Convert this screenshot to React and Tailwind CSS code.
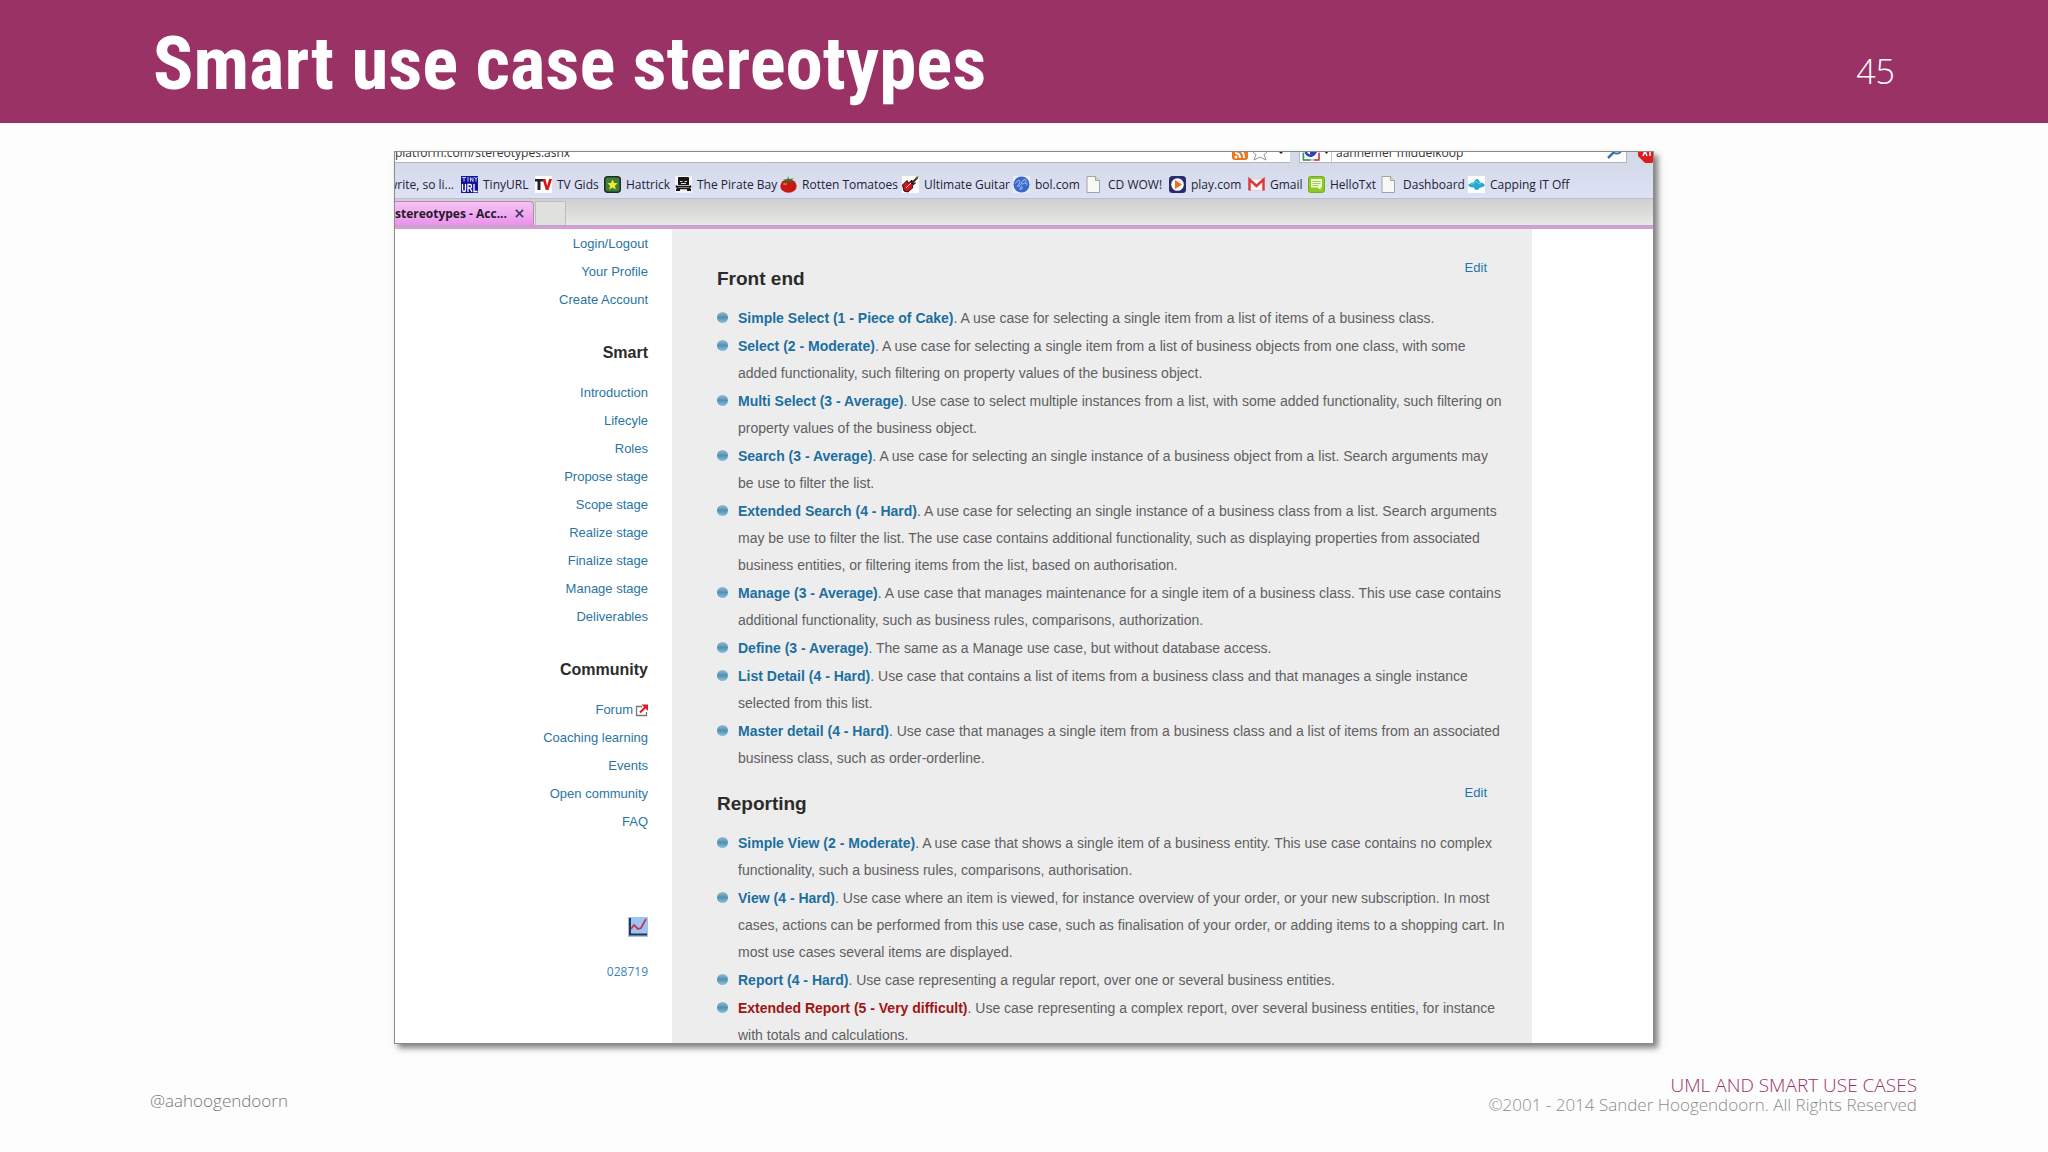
const frontEnd = [
  { name: "Simple Select (1 - Piece of Cake)", lines: ["A use case for selecting a single item from a list of items of a business class."] },
  {
    name: "Select (2 - Moderate)",
    lines: [
      "A use case for selecting a single item from a list of business objects from one class, with some",
      "added functionality, such filtering on property values of the business object.",
    ],
  },
  {
    name: "Multi Select (3 - Average)",
    lines: [
      "Use case to select multiple instances from a list, with some added functionality, such filtering on",
      "property values of the business object.",
    ],
  },
  {
    name: "Search (3 - Average)",
    lines: [
      "A use case for selecting an single instance of a business object from a list. Search arguments may",
      "be use to filter the list.",
    ],
  },
  {
    name: "Extended Search (4 - Hard)",
    lines: [
      "A use case for selecting an single instance of a business class from a list. Search arguments",
      "may be use to filter the list. The use case contains additional functionality, such as displaying properties from associated",
      "business entities, or filtering items from the list, based on authorisation.",
    ],
  },
  {
    name: "Manage (3 - Average)",
    lines: [
      "A use case that manages maintenance for a single item of a business class. This use case contains",
      "additional functionality, such as business rules, comparisons, authorization.",
    ],
  },
  { name: "Define (3 - Average)", lines: ["The same as a Manage use case, but without database access."] },
  {
    name: "List Detail (4 - Hard)",
    lines: [
      "Use case that contains a list of items from a business class and that manages a single instance",
      "selected from this list.",
    ],
  },
  {
    name: "Master detail (4 - Hard)",
    lines: [
      "Use case that manages a single item from a business class and a list of items from an associated",
      "business class, such as order-orderline.",
    ],
  },
];

const reporting = [
  {
    name: "Simple View (2 - Moderate)",
    lines: [
      "A use case that shows a single item of a business entity. This use case contains no complex",
      "functionality, such a business rules, comparisons, authorisation.",
    ],
  },
  {
    name: "View (4 - Hard)",
    lines: [
      "Use case where an item is viewed, for instance overview of your order, or your new subscription. In most",
      "cases, actions can be performed from this use case, such as finalisation of your order, or adding items to a shopping cart. In",
      "most use cases several items are displayed.",
    ],
  },
  { name: "Report (4 - Hard)", lines: ["Use case representing a regular report, over one or several business entities."] },
  {
    name: "Extended Report (5 - Very difficult)",
    missing: true,
    lines: [
      "Use case representing a complex report, over several business entities, for instance",
      "with totals and calculations.",
    ],
  },
];

function PageIcon() {
  return (
    <svg viewBox="0 0 17 17" className="size-[17px] shrink-0">
      <path d="M1 .5h8.500l4 4v12H1z" fill="#f8f8f4" stroke="#a3a3a3" />
      <path d="M9.500 .5v4h4" fill="#dcdcdc" stroke="#a3a3a3" />
    </svg>
  );
}

function TinyUrlIcon() {
  return (
    <svg viewBox="0 0 17 17" className="size-[17px] shrink-0">
      <path d="M0 0h17v17H0z" fill="#12129a" />
      <path
        d="M1 1.500h4M3 1.500v4M7 1v4.500M9.500 5.500v-4l2.500 4v-4M13.500 1l1.500 2 1.500-2M15 3v2.500"
        fill="none"
        stroke="#c9c9f2"
      />
      <path d="M1.500 8v5.500q0 2 1.500 2t1.500-2V8M7 16V8.500h2q1.500 0 1.500 1.800T9 12H7m2 0 2 4M13 8v7.500h3.500" fill="none" stroke="#fff" strokeWidth="1.300" />
    </svg>
  );
}

function TvIcon() {
  return (
    <svg viewBox="0 0 17 17" className="size-[17px] shrink-0">
      <path d="M0 0h17v17H0z" fill="#fff" />
      <path d="M0 3h8v2.500H5.500V14h-3V5.500H0z" fill="#222" />
      <path d="M7.500 3h3l1.700 7L14 3h3l-3.500 11h-2.700z" fill="#d81418" />
    </svg>
  );
}

function HattrickIcon() {
  return (
    <svg viewBox="0 0 17 17" className="size-[17px] shrink-0">
      <rect x=".75" y=".75" width="15.500" height="15.500" rx="3" fill="#3c7f3a" stroke="#1e2a22" strokeWidth="1.500" />
      <path d="m8.500 3.500 1.500 3.400 3.700.3-2.800 2.500.9 3.700-3.300-2-3.300 2 .9-3.700-2.800-2.500 3.700-.3z" fill="#f8e92c" />
    </svg>
  );
}

function PirateIcon() {
  return (
    <svg viewBox="0 0 17 17" className="size-[17px] shrink-0">
      <path d="M0 0h17v17H0z" fill="#f4f4f8" />
      <path d="M3 2q0-1 1-1h9q1 0 1 1v7H3z" fill="#161616" />
      <path d="M5 5.500h2.500M9.500 5.500H12M6 7.500h5" stroke="#ddd" />
      <path d="M1 9.500 2.500 12.500h12L16 9.500M.5 10.500h16" fill="none" stroke="#161616" strokeWidth="1.500" />
      <path d="M1 14h4M12 14h4" stroke="#161616" strokeWidth="2" />
    </svg>
  );
}

function TomatoIcon() {
  return (
    <svg viewBox="0 0 17 17" className="size-[17px] shrink-0">
      <ellipse cx="8.500" cy="10" rx="8.200" ry="6.800" fill="#c51a12" />
      <ellipse cx="5" cy="8" rx="2" ry="1.300" fill="#e8604c" />
      <path d="M8 0 9 3l5-.5-3 2 1 2.500-3.500-2L5 7.500 6 4.500 2.500 4 7.500 3z" fill="#2f7a25" />
    </svg>
  );
}

function GuitarIcon() {
  return (
    <svg viewBox="0 0 17 17" className="size-[17px] shrink-0">
      <path d="M0 0h17v17H0z" fill="#fff" />
      <path d="m9 8 6-6" stroke="#23231c" strokeWidth="1.800" />
      <path d="m13.500 1 3-1-.5 3-2 1z" fill="#5e6a1d" />
      <path d="M.5 9 5 4.500l1.500 2.500L10 4l-.5 3.500 4-.5-3.500 3 1 1.500L6 16l-4-1z" fill="#d4141c" stroke="#1a1010" />
      <path d="m4 12 5-5" stroke="#f5e4e4" />
    </svg>
  );
}

function BolIcon() {
  return (
    <svg viewBox="0 0 17 17" className="size-[17px] shrink-0">
      <path d="M0 0h17v17H0z" fill="#e9edf8" />
      <circle cx="8.500" cy="8.500" r="8" fill="#3968c8" />
      <path
        d="M2.500 7.500C5 3 8 4 6.500 7S3 11 6 10s3-7 6-6.500-1 5-3 4.500M7 12c1.500-3 3-1 2 .5s-2 2-2-.5m5-4c2-2 3 0 1.500 1.500"
        fill="none"
        stroke="#b3c9f4"
      />
    </svg>
  );
}

function PlayIcon() {
  return (
    <svg viewBox="0 0 17 17" className="size-[17px] shrink-0">
      <rect width="17" height="17" rx="3.500" fill="#2b2b6c" />
      <circle cx="8.500" cy="8.500" r="6.300" fill="#fff" />
      <path d="m6 4 7 4.500L6 13z" fill="#f36c18" />
    </svg>
  );
}

function GmailIcon() {
  return (
    <svg viewBox="0 0 17 17" className="size-[17px] shrink-0">
      <path d="M1 3h15v11.500H1z" fill="#fbf6f6" stroke="#dcb9b9" strokeWidth=".6" />
      <path d="M1.500 14.500V3.500l7 6.500 7-6.500v11" fill="none" stroke="#d8393a" strokeWidth="2.400" />
    </svg>
  );
}

function HelloTxtIcon() {
  return (
    <svg viewBox="0 0 17 17" className="size-[17px] shrink-0">
      <rect x=".5" y=".5" width="16" height="16" rx="2" fill="#8cc926" stroke="#76b01c" />
      <path d="M3 3h11v8.500h-1.500V14l-3-2.500H3z" fill="#f1f9d8" />
      <path d="M4.500 5.500h8M4.500 7.500h8M4.500 9.500h6" stroke="#a4d052" />
    </svg>
  );
}

function CappingIcon() {
  return (
    <svg viewBox="0 0 17 17" className="size-[17px] shrink-0">
      <path d="M0 0h17v17H0z" fill="#fff" />
      <path d="M0 9q3-3 5.500-2.500Q7 3 9 3t3 3.500Q15 6 17 9q-2 3-5 2.500Q10.500 14 8.500 14T6 11.500Q2 12 0 9" fill="#27a9cf" />
      <path d="M3 8.500q4-1.500 5-3.500 2 3 5 3" fill="none" stroke="#6fd0e8" />
    </svg>
  );
}

const bookmarks = [
  { label: "TinyURL", Icon: TinyUrlIcon, width: "w-[74px]" },
  { label: "TV Gids", Icon: TvIcon, width: "w-[69px]" },
  { label: "Hattrick", Icon: HattrickIcon, width: "w-[71px]" },
  { label: "The Pirate Bay", Icon: PirateIcon, width: "w-[105px]" },
  { label: "Rotten Tomatoes", Icon: TomatoIcon, width: "w-[122px]" },
  { label: "Ultimate Guitar", Icon: GuitarIcon, width: "w-[111px]" },
  { label: "bol.com", Icon: BolIcon, width: "w-[73px]" },
  { label: "CD WOW!", Icon: PageIcon, width: "w-[83px]" },
  { label: "play.com", Icon: PlayIcon, width: "w-[79px]" },
  { label: "Gmail", Icon: GmailIcon, width: "w-[60px]" },
  { label: "HelloTxt", Icon: HelloTxtIcon, width: "w-[73px]" },
  { label: "Dashboard", Icon: PageIcon, width: "w-[87px]" },
  { label: "Capping IT Off", Icon: CappingIcon, width: "w-[110px]" },
];

function AddressRow() {
  return (
    <div className="flex h-[11px] items-end overflow-hidden bg-[#d5daea]">
      <div className="flex h-[11px] flex-1 items-end border-b border-[#b5b3bd] bg-white">
        <input
          aria-label="Address"
          defaultValue="platform.com/stereotypes.ashx"
          className="h-[18px] min-w-0 flex-1 text-xs leading-[18px] text-[#333] outline-none"
        />
        <svg viewBox="0 0 60 18" className="h-[18px] w-[60px]">
          <rect x="2" y="1" width="16" height="15" rx="3" fill="#e9781f" />
          <path d="M5 5q9 0 9 9M5 9q5 0 5 5" fill="none" stroke="#fff" strokeWidth="2" />
          <circle cx="6" cy="13" r="1.500" fill="#fff" />
          <path d="m30 1 2 6h6l-4 3.500 2 5.500-6-3-6 3 2-5.500L22 7h6z" fill="#fff" stroke="#999" />
          <path d="M48 7h6l-3 3z" fill="#222" />
        </svg>
      </div>
      <div className="ml-[9px] flex h-[11px] w-[328px] items-end border-x border-b border-[#b5b3bd] bg-white">
        <svg viewBox="0 0 32 18" className="h-[18px] w-8">
          <path d="M3 0h16v16H3z" fill="#fff" stroke="#8ea4c8" />
          <path d="M14 3a5 5 0 1 0 1 6h-5" fill="none" stroke="#2745b5" strokeWidth="2.500" />
          <path d="M3.500 9v7h7" fill="none" stroke="#3f9b45" strokeWidth="1.500" />
          <path d="M19 9v7h-5" fill="none" stroke="#cf3a3a" strokeWidth="1.500" />
          <path d="M24 7h5l-2.500 3z" fill="#222" />
          <path d="M31.500 0v18" stroke="#c9c9c9" />
        </svg>
        <input
          aria-label="Search"
          defaultValue="aannemer middelkoop"
          className="ml-1 h-[18px] min-w-0 flex-1 text-xs leading-[18px] text-[#333] outline-none"
        />
        <svg viewBox="0 0 20 18" className="h-[18px] w-5">
          <circle cx="11" cy="5" r="4.500" fill="none" stroke="#3c73ad" strokeWidth="2" />
          <path d="m8 8-6 6" stroke="#3c73ad" strokeWidth="2.500" />
        </svg>
      </div>
      <svg viewBox="0 0 26 18" className="h-[18px] w-[26px] shrink-0">
        <path d="M15 0h10l5 5v8l-5 5H18l-7-7V4z" fill="#e01b1b" />
        <path d="m16 11 2-5 2 5m3 0V6h3" fill="none" stroke="#fff" strokeWidth="1.500" />
      </svg>
    </div>
  );
}

function BrowserChrome() {
  return (
    <div className="font-['Open_Sans','Noto_Sans',sans-serif] whitespace-nowrap">
      <AddressRow />
      <nav
        aria-label="Bookmarks"
        className="flex h-9 items-center overflow-hidden border-b border-[#b9bfd0] bg-linear-to-b from-[#d5daea] to-[#dde1f5] pt-2 text-xs text-[#1d2433]"
      >
        <a href="#" className="flex w-[66px] shrink-0 justify-end overflow-hidden pr-[7px]">
          write, so li...
        </a>
        {bookmarks.map(({ label, Icon, width }) => (
          <a key={label} href="#" className={`flex shrink-0 items-center gap-[5px] ${width}`}>
            <Icon />
            {label}
          </a>
        ))}
      </nav>

      {/* Tabs */}
      <div className="flex h-[27px] items-stretch border-b border-[#b9a9bd] bg-linear-to-b from-[#cfcfcf] to-[#e8e8e6] pt-[2px]">
        <div className="flex w-[139px] items-center justify-between rounded-tr border-t border-r border-[#b987b8] bg-linear-to-b from-[#f6c3f5] to-[#ea92ea] pr-[9px] text-xs font-bold text-[#241a2b]">
          stereotypes - Acc...
          <button type="button" aria-label="Close tab">
            <svg viewBox="0 0 10 10" className="size-[9px]">
              <path d="m1 1 8 8M9 1 1 9" stroke="#3f3a5a" strokeWidth="1.800" />
            </svg>
          </button>
        </div>
        <button type="button" aria-label="New tab" className="ml-px w-[31px] border border-b-0 border-[#bdbdbd] bg-[#e0e0df]" />
      </div>
      <div className="h-[3px] bg-[#d79bd8]" />
    </div>
  );
}

function SideLinks({ title, links }) {
  return (
    <div>
      {title && <h2 className="mb-3 pt-[25px] text-base leading-7 font-bold text-[#2b2b2b]">{title}</h2>}
      <ul className="text-[13px] leading-7">
        {links.map((link) => (
          <li key={link} className="flex justify-end">
            <a href="#" className="flex items-center gap-[2px] text-[#2a75a5]">
              {link}
              {link === "Forum" && (
                <svg viewBox="0 0 13 13" className="size-[13px]">
                  <path d="M7 2.500H1.500v9h10V8" fill="none" stroke="#777" strokeWidth="1.300" />
                  <path d="m5 8.500 5-5" stroke="#dc1c24" strokeWidth="2.200" />
                  <path d="M6.500.5H13V7z" fill="#dc1c24" />
                </svg>
              )}
            </a>
          </li>
        ))}
      </ul>
    </div>
  );
}

function Sidebar() {
  return (
    <aside className="w-[277px] shrink-0 pt-px pr-6 text-right">
      <SideLinks links={["Login/Logout", "Your Profile", "Create Account"]} />
      <SideLinks
        title="Smart"
        links={[
          "Introduction",
          "Lifecyle",
          "Roles",
          "Propose stage",
          "Scope stage",
          "Realize stage",
          "Finalize stage",
          "Manage stage",
          "Deliverables",
        ]}
      />
      <SideLinks title="Community" links={["Forum", "Coaching learning", "Events", "Open community", "FAQ"]} />
      <svg viewBox="0 0 20 20" className="mt-[81px] ml-auto size-5">
        <path d="M0 0h20v20H0z" fill="#9cc4f4" />
        <path d="M2 1v16.500h17" fill="none" stroke="#2c3550" strokeWidth="2" />
        <path d="m3 12 3-4 4 4 3-1 5-9" fill="none" stroke="#c93550" strokeWidth="1.800" />
      </svg>
      <p className="mt-[25px] font-['Open_Sans',sans-serif] text-xs leading-5 text-[#3a83bd]">028719</p>
    </aside>
  );
}

function Stereotypes({ title, items }) {
  return (
    <section>
      <div className="flex justify-between leading-7">
        <h2 className="pt-[11px] text-[19px] leading-7 font-bold text-[#2b2b2b]">{title}</h2>
        <a href="#" className="text-[13px] leading-7 text-[#1f76a8]">
          Edit
        </a>
      </div>
      <ul className="mt-3 space-y-px text-sm leading-[27px] whitespace-nowrap text-[#606060]">
        {items.map((item) => (
          <li key={item.name} className="flex items-start gap-[10px]">
            <span className="mt-[7px] size-[11px] shrink-0 rounded-full bg-linear-to-b from-[#9db9c8] via-[#4c92b4] to-[#8cc3dc]" />
            <p>
              <a href="#" className={item.missing ? "font-bold text-[#a01414]" : "font-bold text-[#1c6f9f]"}>
                {item.name}
              </a>
              . {item.lines[0]}
              {item.lines.slice(1).map((line) => (
                <span key={line} className="block">
                  {line}
                </span>
              ))}
            </p>
          </li>
        ))}
      </ul>
    </section>
  );
}

export default function App() {
  return (
    <div className="flex min-h-screen flex-col bg-[#fdfdfd] font-['Open_Sans',sans-serif]">
      <header className="flex h-[123px] items-center justify-between border-b border-[#86305c] bg-[#9a3265] pr-[153px] pl-[153px] text-white">
        <h1 className="pt-1 font-['Roboto_Condensed','Liberation_Sans_Narrow',sans-serif] text-[75px] leading-none font-bold whitespace-nowrap">
          Smart use case stereotypes
        </h1>
        <span className="pt-5 text-[34px] font-light">45</span>
      </header>

      <main className="mx-auto mt-7 w-full max-w-[1260px] overflow-hidden border border-[#8b8b8b] bg-white font-['Liberation_Sans',Arial,sans-serif] shadow-[4px_4px_6px_rgba(0,0,0,0.5)]">
        <BrowserChrome />
        <div className="-mb-[6px] flex">
          <Sidebar />
          <div className="flex min-w-0 flex-1 flex-col gap-[7px] bg-[#ededee] px-[45px] pt-[25px]">
            <Stereotypes title="Front end" items={frontEnd} />
            <Stereotypes title="Reporting" items={reporting} />
          </div>
          <div className="w-[121px] shrink-0" />
        </div>
      </main>

      <footer className="mt-auto flex items-center justify-between pr-[131px] pb-[37px] pl-[150px] font-light">
        <span className="pt-3 text-[17px] leading-6 text-[#777]">@aahoogendoorn</span>
        <div className="text-right text-[#8c8c8c]">
          <p className="text-[19px] leading-5 text-[#9a3265]">UML AND SMART USE CASES</p>
          <p className="text-[17px] leading-5">©2001 - 2014 Sander Hoogendoorn. All Rights Reserved</p>
        </div>
      </footer>
    </div>
  );
}
